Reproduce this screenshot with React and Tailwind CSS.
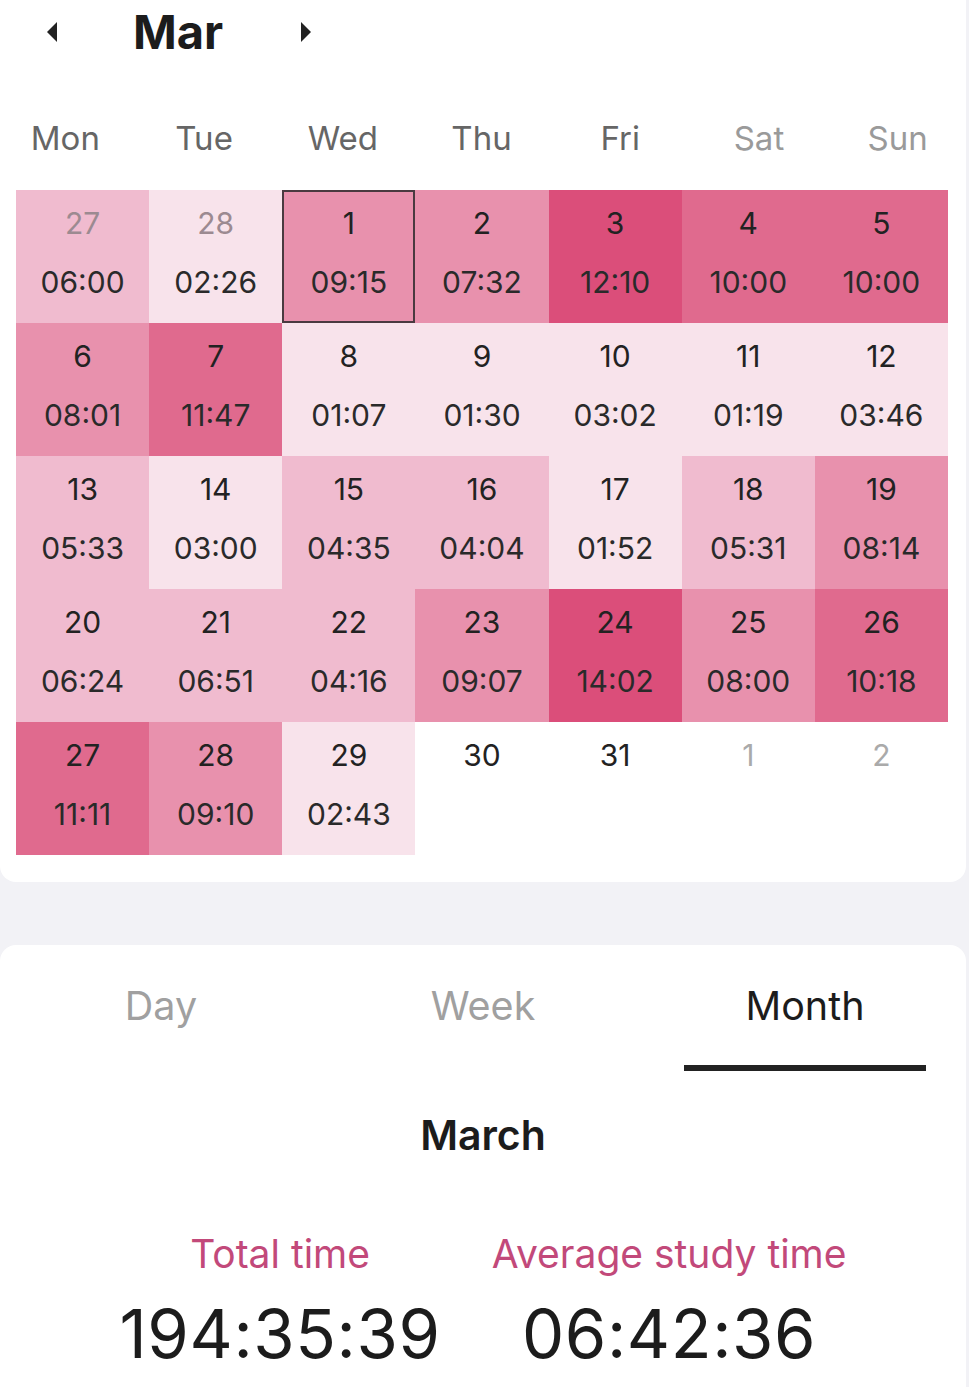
import React, { useState } from "react";

const FONT = { fontFamily: "Inter, 'Noto Sans', sans-serif" };

const LEVEL_BG = [
  "bg-white",
  "bg-[#f8e3eb]",
  "bg-[#f0bbcf]",
  "bg-[#e891ad]",
  "bg-[#e06a8e]",
  "bg-[#db4e7a]",
];

// [day, time, level, muted]
const CELLS = [
  [27, "06:00", 2, true], [28, "02:26", 1, true], [1, "09:15", 3], [2, "07:32", 3], [3, "12:10", 5], [4, "10:00", 4], [5, "10:00", 4],
  [6, "08:01", 3], [7, "11:47", 4], [8, "01:07", 1], [9, "01:30", 1], [10, "03:02", 1], [11, "01:19", 1], [12, "03:46", 1],
  [13, "05:33", 2], [14, "03:00", 1], [15, "04:35", 2], [16, "04:04", 2], [17, "01:52", 1], [18, "05:31", 2], [19, "08:14", 3],
  [20, "06:24", 2], [21, "06:51", 2], [22, "04:16", 2], [23, "09:07", 3], [24, "14:02", 5], [25, "08:00", 3], [26, "10:18", 4],
  [27, "11:11", 4], [28, "09:10", 3], [29, "02:43", 1], [30, null, 0], [31, null, 0], [1, null, 0, true], [2, null, 0, true],
];

const WEEK = ["Mon", "Tue", "Wed", "Thu", "Fri", "Sat", "Sun"];

function Arrow({ dir }) {
  return (
    <svg width="12" height="22" viewBox="0 0 12 22">
      {dir === "left" ? (
        <path d="M11 1 L1 11 L11 21 Z" fill="#222" />
      ) : (
        <path d="M1 1 L11 11 L1 21 Z" fill="#222" />
      )}
    </svg>
  );
}

function DayCell({ cell, selected }) {
  const [day, time, level, muted] = cell;
  const numColor = !muted ? "text-[#222]" : level === 0 ? "text-[#aaa]" : "text-[#9c8a91]";
  return (
    <div
      className={`h-[133px] flex flex-col items-center pt-[18px] ${LEVEL_BG[level]} ${
        selected ? "outline-2 -outline-offset-2 outline-[#4a3a40]" : ""
      }`}
    >
      <div className={`text-[30px] leading-[30px] ${numColor}`}>{day}</div>
      {time && <div className="mt-[29px] text-[30px] leading-[30px] text-[#2a2a2a]">{time}</div>}
    </div>
  );
}

export default function App() {
  const [tab, setTab] = useState("Month");

  return (
    <div className="w-[969px] min-h-screen bg-[#f2f2f6]" style={FONT}>
      <div className="bg-white mr-[3px] rounded-b-2xl pb-[27px]">
        <div className="h-[64px] flex items-center">
          <button className="w-[40px] ml-[32px] flex justify-center">
            <Arrow dir="left" />
          </button>
          <div className="w-[212px] text-center text-[47px] leading-[56px] font-bold text-[#1c1c1c]">Mar</div>
          <button className="w-[40px] ml-[2px] flex justify-center">
            <Arrow dir="right" />
          </button>
        </div>

        <div className="grid grid-cols-7 w-[971px] -ml-[4px] h-[126px] pt-[54px]">
          {WEEK.map((w, i) => (
            <div key={w} className={`text-center text-[33px] leading-[40px] ${i > 4 ? "text-[#9a9a9a]" : "text-[#666]"}`}>
              {w}
            </div>
          ))}
        </div>

        <div className="grid grid-cols-7 ml-[16px] mr-[18px]">
          {CELLS.map((c, i) => (
            <DayCell key={i} cell={c} selected={i === 2} />
          ))}
        </div>
      </div>

      <div className="h-[63px]" />

      <div className="bg-white mr-[3px] rounded-t-2xl h-[442px]">
        <div className="grid grid-cols-3">
          {["Day", "Week", "Month"].map((t) => (
            <button key={t} onClick={() => setTab(t)} className="flex flex-col items-center pt-[40px]">
              <span className={`text-[39.5px] leading-[42px] ${tab === t ? "text-[#1c1c1c]" : "text-[#a0a0a0]"}`}>{t}</span>
              <span className={`mt-[38px] h-[6px] w-[242px] ${tab === t ? "bg-[#222]" : "bg-transparent"}`} />
            </button>
          ))}
        </div>

        <div className="mt-[40px] text-center text-[41px] leading-[48px] font-semibold text-[#1c1c1c]">March</div>

        <div className="flex justify-center gap-[51px] mt-[73px]">
          <div className="flex flex-col items-center">
            <div className="text-[39px] leading-[44px] text-[#c2497a]">Total time</div>
            <div className="mt-[22px] text-[67px] leading-[72px] tracking-[0.6px] text-[#1c1c1c]">194:35:39</div>
          </div>
          <div className="flex flex-col items-center">
            <div className="text-[39px] leading-[44px] text-[#c2497a]">Average study time</div>
            <div className="mt-[22px] text-[67px] leading-[72px] tracking-[0.6px] text-[#1c1c1c]">06:42:36</div>
          </div>
        </div>
      </div>
    </div>
  );
}
